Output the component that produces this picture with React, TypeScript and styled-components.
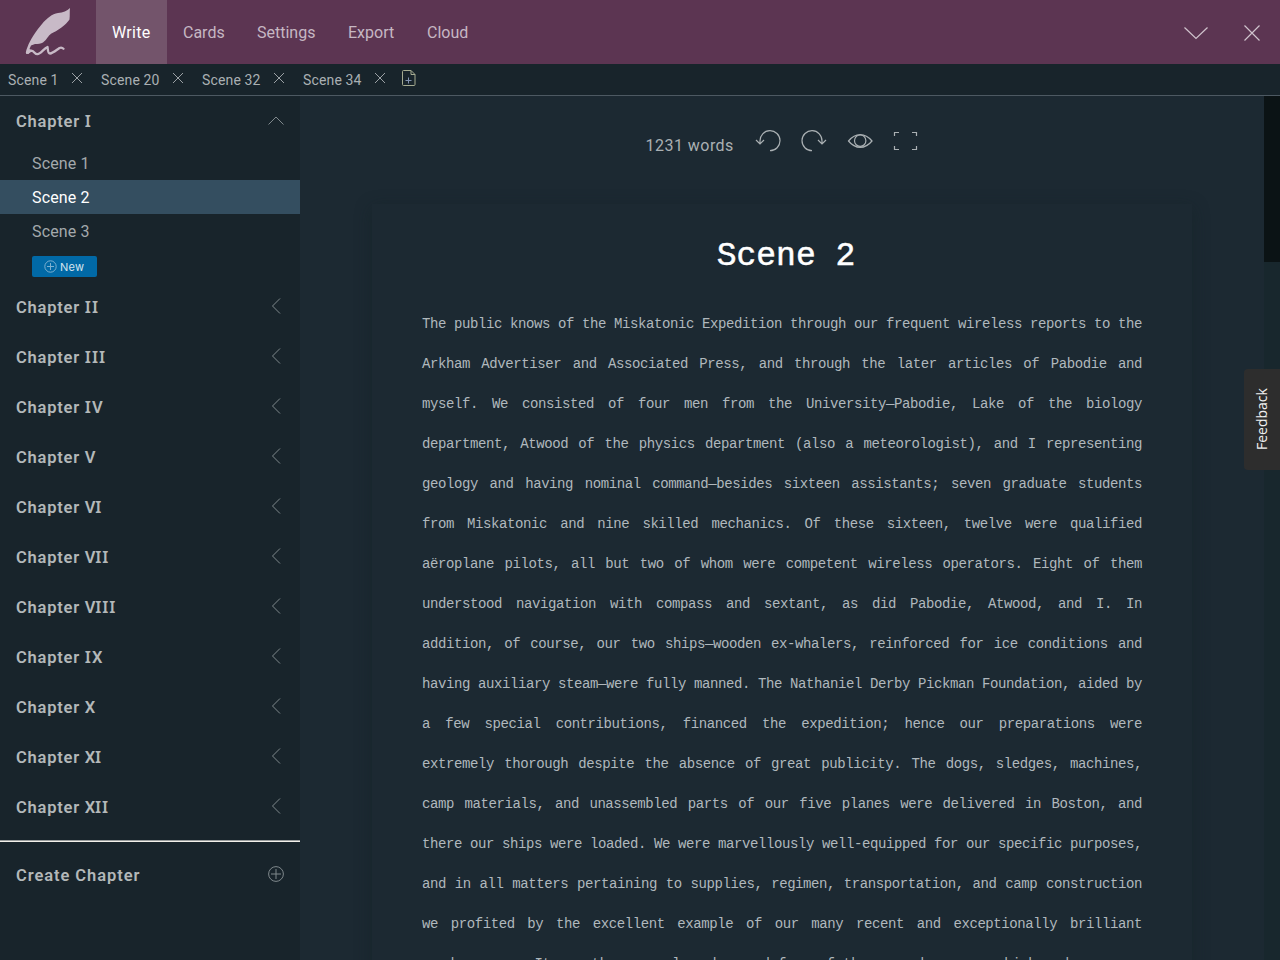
import React from "react";
import styled, { createGlobalStyle } from "styled-components";

const Global = createGlobalStyle`
  * { box-sizing: border-box; }
  html, body { margin: 0; height: 960px; overflow: hidden; background: #1c2932; }
  body { font-family: Roboto, "Liberation Sans", sans-serif; font-size: 16px; color: #aab0b3; }
  svg { flex: none; }
`;

const Page = styled.div`
  display: flex;
  flex-direction: column;
  width: 1280px;
  height: 960px;
  overflow: hidden;
  position: relative;
`;
const Header = styled.header`
  flex: none;
  height: 64px;
  display: flex;
  background: #5c3552;
`;
const Logo = styled.div`
  width: 96px;
  height: 64px;
`;
const Nav = styled.nav`
  display: flex;
  flex: 1;
`;
const NavItem = styled.a<{ $w: number; $ls: number; $active?: boolean }>`
  width: ${(p) => p.$w}px;
  height: 64px;
  padding-left: 16px;
  line-height: 65px;
  white-space: nowrap;
  letter-spacing: ${(p) => p.$ls}px;
  color: ${(p) => (p.$active ? "#fff" : "#c6b7c3")};
  background: ${(p) => (p.$active ? "#73546b" : "transparent")};
`;
const WindowActions = styled.div`
  display: flex;
  align-items: center;
  gap: 36px;
  padding: 1px 20px 0 0;
  color: #d0c3cd;
`;
const TabBar = styled.div`
  flex: none;
  height: 32px;
  display: flex;
  background: #18242b;
  border-bottom: 1px solid #4d5962;
  padding-left: 8px;
`;
const Tab = styled.div<{ $w: number }>`
  display: flex;
  justify-content: space-between;
  width: ${(p) => p.$w}px;
  height: 31px;
  margin-right: 18px;
  font-size: 14px;
  line-height: 32px;
  white-space: nowrap;
  letter-spacing: 0.15px;
  svg { margin-top: 8px; }
`;
const AddTab = styled.div`
  margin: 6px 0 0 -2px;
  line-height: 0;
`;
const Body = styled.div`
  flex: 1;
  min-height: 0;
  display: flex;
`;
const Sidebar = styled.aside`
  width: 300px;
  background: #18242b;
`;
const ChapterRow = styled.div`
  height: 50px;
  padding: 0 16px;
  display: flex;
  align-items: center;
  justify-content: space-between;
  font-size: 16.5px;
  line-height: 20px;
  font-weight: 600;
  letter-spacing: 0.78px;
  color: #b3b8b9;
  > span { padding-top: 2px; }
  svg { color: #7f888c; margin-bottom: 2px; }
`;
const Numeral = styled.span`
  letter-spacing: -0.4px;
`;
const SerifI = styled.span`
  font-family: "Noto Sans", sans-serif;
  line-height: 1;
  letter-spacing: 0.95px;
`;
const CreateLabel = styled.span`
  letter-spacing: 0.93px;
`;
const SceneRow = styled.div<{ $active?: boolean }>`
  height: 34px;
  line-height: 35px;
  padding-left: 32px;
  letter-spacing: 0.15px;
  color: ${(p) => (p.$active ? "#fff" : "#a3a9ac")};
  background: ${(p) => (p.$active ? "#344e60" : "transparent")};
`;
const NewButton = styled.button`
  display: flex;
  align-items: center;
  gap: 3px;
  width: 65px;
  height: 21px;
  margin: 8px 0 5px 32px;
  padding: 0 0 0 12px;
  border: 0;
  border-radius: 2px;
  background: #0169a6;
  color: #d5e4ee;
  font: 11px Inter, sans-serif;
  letter-spacing: 0.3px;
  svg { color: #7db0d0; }
`;
const Divider = styled.div`
  height: 2px;
  margin: 8px 0;
  border-top: 1px solid #999d9d;
  background: #f2f0ea;
`;
const Editor = styled.main`
  flex: 1;
  overflow: hidden;
  display: flex;
  flex-direction: column;
  align-items: center;
`;
const Toolbar = styled.div`
  flex: none;
  height: 108px;
  width: 273px;
  padding-top: 32px;
  display: flex;
  align-items: flex-start;
  gap: 20px;
`;
const WordCount = styled.span`
  flex: none;
  width: 89px;
  line-height: 35px;
  white-space: nowrap;
  letter-spacing: 0.47px;
`;
const Sheet = styled.article`
  width: 820px;
  height: 1200px;
  flex: none;
  padding: 33px 50px;
  box-shadow: 0 4px 16px rgba(18, 34, 36, 0.45);
  font-family: "Liberation Mono", monospace;
`;
const Title = styled.h1`
  margin: 0;
  padding-left: 8px;
  height: 67px;
  line-height: 40px;
  text-align: center;
  font-size: 33px;
  font-weight: 400;
  color: #fff;
  -webkit-text-stroke: 0.5px #fff;
`;
const Prose = styled.p`
  margin: 0;
  width: 720px;
  text-align: justify;
  font-size: 14px;
  line-height: 40px;
  letter-spacing: -0.405px;
  color: #b0b8bd;
`;
const ScrollTrack = styled.div`
  width: 16px;
  background: #18272d;
`;
const ScrollThumb = styled.div`
  height: 166px;
  background: #0b1315;
`;
const Feedback = styled.div`
  position: absolute;
  right: 0;
  top: 369px;
  width: 36px;
  height: 101px;
  padding-left: 2px;
  border-radius: 0 4px 4px 0;
  background: #2d2d2d;
  color: #f0f0f0;
  display: flex;
  align-items: center;
  justify-content: center;
  writing-mode: vertical-rl;
  transform: rotate(180deg);
  font: 14px "Open Sans", sans-serif;
`;

type IconProps = { w: number; h: number; d: string; sw?: number; children?: React.ReactNode };
const Icon = ({ w, h, d, sw = 1, children }: IconProps) => (
  <svg width={w} height={h} viewBox={`0 0 ${w} ${h}`} fill="none" stroke="currentColor" strokeWidth={sw}>
    <path d={d} />
    {children}
  </svg>
);
const CloseSmall = () => <Icon w={12} h={12} d="M1 1L11 11M11 1L1 11" sw={0.9} />;

const nav = [
  { t: "Write", w: 71, ls: 0.3, active: true },
  { t: "Cards", w: 74, ls: 0 },
  { t: "Settings", w: 91, ls: 0 },
  { t: "Export", w: 79, ls: 0 },
  { t: "Cloud", w: 80, ls: 0 },
];
const tabs = [
  { t: "Scene 1", w: 75 },
  { t: "Scene 20", w: 83 },
  { t: "Scene 32", w: 83 },
  { t: "Scene 34", w: 83 },
];
const chapters = ["II", "III", "IV", "V", "VI", "VII", "VIII", "IX", "X", "XI", "XII"];

const ChapterName = ({ n }: { n: string }) => (
  <span>
    Chapter{" "}
    <Numeral>{n.split(/(I+)/).map((part, i) => (part.startsWith("I") ? <SerifI key={i}>{part}</SerifI> : part))}</Numeral>
  </span>
);

export default function App() {
  return (
    <Page>
      <Global />
      <Header>
        <Logo>
          <svg width="96" height="64" viewBox="0 0 96 64">
            <path
              fill="#c8bac7"
              d="M70 8C67 11 63 12.5 58 13C52 14 47 18 42 24C36 31 30 40 27.5 47C26.3 50 25.7 52 26 53.5L28.5 54L32 50.5L29.5 49L31 45.5L35 44L30.5 43.7C35 44.5 40 44 43 42.5C47 39.5 48 36 51 33.8C57 31 66 25 69.5 19.5C70 15 69.5 12 70 8Z"
            />
            <path
              fill="none"
              stroke="#c8bac7"
              strokeWidth="2.3"
              strokeLinecap="round"
              strokeLinejoin="round"
              d="M27 52.8Q29.5 50.5 32 50.8C34 51 35 54.5 37.5 54.2C40.5 54 44 48.5 47.5 47C48 49 47.5 53.5 50 53.5C53 53.2 57 49.5 59.5 48C61 47.3 62.5 47.8 63.5 48.8"
            />
          </svg>
        </Logo>
        <Nav>
          {nav.map((n) => (
            <NavItem key={n.t} $w={n.w} $ls={n.ls} $active={n.active}>{n.t}</NavItem>
          ))}
        </Nav>
        <WindowActions>
          <Icon w={24} h={14} d="M0.5 1.5L12 12.5L23.5 1.5" sw={1.2} />
          <Icon w={16} h={16} d="M0.5 0.5L15.5 15.5M15.5 0.5L0.5 15.5" sw={1.2} />
        </WindowActions>
      </Header>
      <TabBar>
        {tabs.map((t) => (
          <Tab key={t.t} $w={t.w}>
            <span>{t.t}</span>
            <CloseSmall />
          </Tab>
        ))}
        <AddTab>
          <svg width="14" height="17" viewBox="0 0 14 17" fill="none" stroke="#a5ab91">
            <path d="M9 0.5H1.5Q0.5 0.5 0.5 1.5V14.5Q0.5 15.5 1.5 15.5H12Q13 15.5 13 14.5V4.5ZM9 0.5V4.5H13" />
            <path stroke="#8494b2" d="M3.5 10.5H9.5M6.5 7.5V13.5" />
          </svg>
        </AddTab>
      </TabBar>
      <Body>
        <Sidebar>
          <ChapterRow>
            <ChapterName n="I" />
            <Icon w={16} h={9} d="M0.5 8.5L8 1L15.5 8.5" />
          </ChapterRow>
          <SceneRow>Scene 1</SceneRow>
          <SceneRow $active>Scene 2</SceneRow>
          <SceneRow>Scene 3</SceneRow>
          <NewButton>
            <Icon w={13} h={13} d="M3 6.5H10M6.5 3V10"><circle cx="6.5" cy="6.5" r="5.7" /></Icon>
            New
          </NewButton>
          {chapters.map((c) => (
            <ChapterRow key={c}>
              <ChapterName n={c} />
              <Icon w={12} h={16} d="M8 0.5L0.5 8L8 15.5" />
            </ChapterRow>
          ))}
          <Divider />
          <ChapterRow>
            <CreateLabel>Create Chapter</CreateLabel>
            <Icon w={16} h={16} d="M3 8H13M8 3V13"><circle cx="8" cy="8" r="7.4" /></Icon>
          </ChapterRow>
        </Sidebar>
        <Editor>
          <Toolbar>
            <WordCount>1231 words</WordCount>
            <Icon w={26} h={26} d="M5 15.5V13A10 10 0 1 1 15 22.7M1 12L5 16L9 12" sw={1.2} />
            <Icon w={26} h={26} d="M21 15.5V13A10 10 0 1 0 11 22.7M17 12L21 16L25 12" sw={1.2} />
            <Icon w={26} h={26} d="M1.5 13C8.5 4.5 18 4.5 25 13C18 21.5 8.5 21.5 1.5 13Z" sw={1.2}>
              <circle cx="13.2" cy="12.7" r="5.7" />
            </Icon>
            <Icon w={26} h={26} d="M1.5 8V4.5H6M19 4.5H23.5V8M23.5 18V21.5H19M6 21.5H1.5V18" sw={1.2} />
          </Toolbar>
          <Sheet>
            <Title>Scene 2</Title>
            <Prose>
              The public knows of the Miskatonic Expedition through our frequent wireless reports to the Arkham
              Advertiser and Associated Press, and through the later articles of Pabodie and myself. We consisted of
              four men from the University—Pabodie, Lake of the biology department, Atwood of the physics department
              (also a meteorologist), and I representing geology and having nominal command—besides sixteen
              assistants; seven graduate students from Miskatonic and nine skilled mechanics. Of these sixteen, twelve
              were qualified aëroplane pilots, all but two of whom were competent wireless operators. Eight of them
              understood navigation with compass and sextant, as did Pabodie, Atwood, and I. In addition, of course,
              our two ships—wooden ex-whalers, reinforced for ice conditions and having auxiliary steam—were fully
              manned. The Nathaniel Derby Pickman Foundation, aided by a few special contributions, financed the
              expedition; hence our preparations were extremely thorough despite the absence of great publicity. The
              dogs, sledges, machines, camp materials, and unassembled parts of our five planes were delivered in
              Boston, and there our ships were loaded. We were marvellously well-equipped for our specific purposes,
              and in all matters pertaining to supplies, regimen, transportation, and camp construction we profited by
              the excellent example of our many recent and exceptionally brilliant predecessors. It was the unusual
              number and fame of these predecessors which made our own expedition—ample though it was—so little
              noticed by the world at large.
            </Prose>
          </Sheet>
        </Editor>
        <ScrollTrack>
          <ScrollThumb />
        </ScrollTrack>
      </Body>
      <Feedback>Feedback</Feedback>
    </Page>
  );
}
